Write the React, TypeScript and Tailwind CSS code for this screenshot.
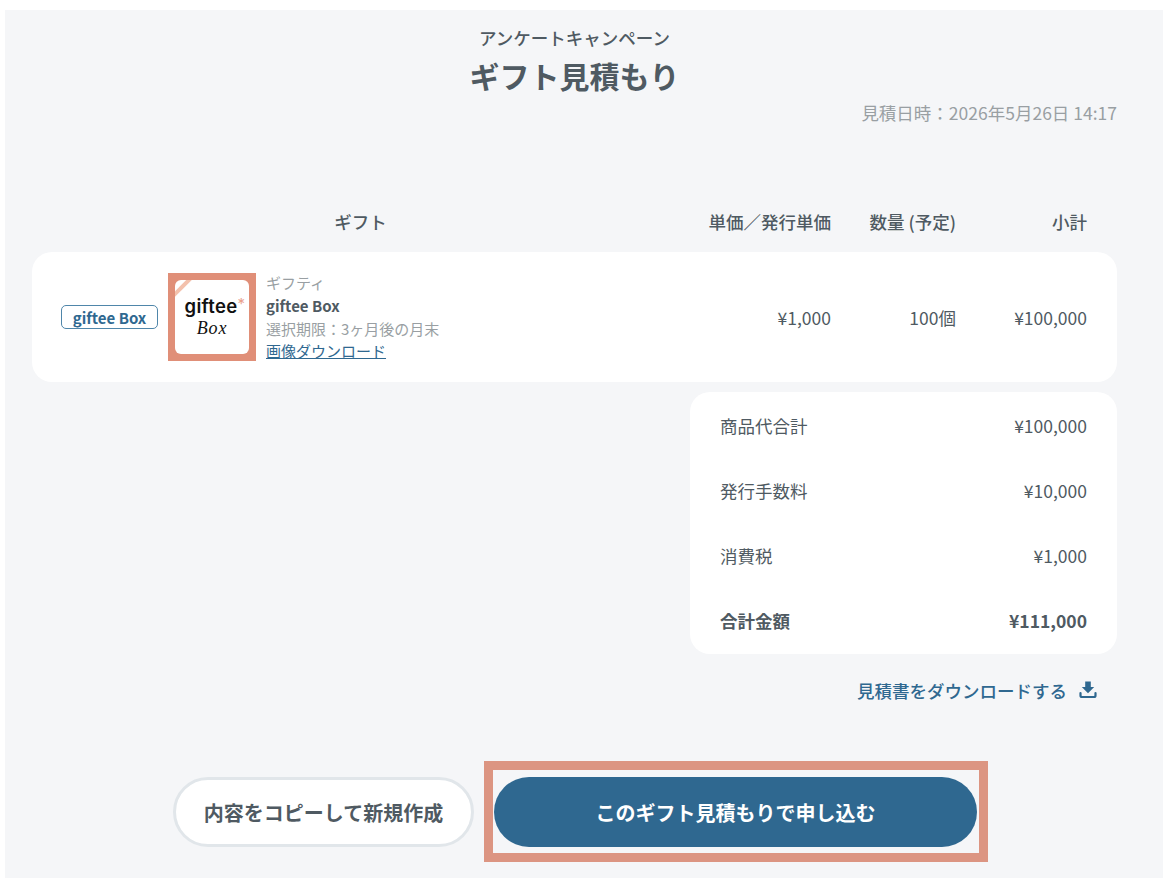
const summary = [
  { label: "商品代合計", value: "¥100,000" },
  { label: "発行手数料", value: "¥10,000" },
  { label: "消費税", value: "¥1,000" },
]

function GiftImage() {
  return (
    <div className="w-[88px] h-[88px] shrink-0 bg-[#e08f78] p-[7px]">
      <div className="relative w-[74px] h-[74px] bg-white rounded-[6px] overflow-hidden flex flex-col items-center text-[#111]">
        {/* corner ribbon */}
        <div className="absolute left-[-9px] top-[4px] w-[34px] h-[4px] bg-[#f3c1ac] -rotate-45" />
        <div className="mt-[14px] h-[24px] leading-[24px] text-[18.5px] font-semibold font-['Inter',sans-serif] tracking-[0.3px] pr-[2px]">
          giftee<span className="absolute mt-[-2px] text-[15px] font-normal text-[#e9a08c]">*</span>
        </div>
        <div className="h-[20px] leading-[20px] text-[18px] font-normal italic font-['Liberation_Serif',serif] tracking-[0.8px]">Box</div>
      </div>
    </div>
  )
}

export default function App() {
  return (
    <div className="min-h-[892px] bg-white pt-[10px] pl-[5px] pr-[13px] font-['Noto_Sans_CJK_JP',sans-serif] text-[#4f5a62]">
      <div className="h-[868px] bg-[#f5f6f8] pl-[27px] pr-[46px]">
        {/* Header */}
        <div className="pt-[16px] text-center">
          <div className="text-[17.5px] leading-[24px] font-medium">アンケートキャンペーン</div>
          <h1 className="mt-[6px] text-[30px] leading-[38px] font-bold">ギフト見積もり</h1>
        </div>
        <div className="mt-[7px] text-right text-[17.5px] leading-[24px] text-[#999fa3]">見積日時：2026年5月26日 14:17</div>

        {/* Table head */}
        <div className="mt-[85px] flex h-[24px] items-center text-[17.5px] leading-[24px] font-medium">
          <div className="w-[657px] text-center">ギフト</div>
          <div className="w-[142px] text-right whitespace-nowrap">単価／発行単価</div>
          <div className="w-[125px] text-right whitespace-nowrap">数量 (予定)</div>
          <div className="w-[131px] text-right">小計</div>
        </div>

        {/* Gift row */}
        <div className="mt-[18px] h-[130px] bg-white rounded-[20px] flex items-center pl-[29px]">
          <span className="w-[97px] h-[24px] shrink-0 rounded-[5px] border border-[#4f86aa] text-[#2f6890] text-[15px] leading-[24px] font-bold text-center">giftee Box</span>
          <div className="ml-[10px]"><GiftImage /></div>
          <div className="ml-[10px] w-[323px] text-[15px] leading-[23px] text-[#999fa3] pb-[2px]">
            <div>ギフティ</div>
            <div className="font-bold text-[#4f5a62]">giftee Box</div>
            <div>選択期限：3ヶ月後の月末</div>
            <a className="block leading-[22px] text-[#2f6890] underline">画像ダウンロード</a>
          </div>
          <div className="w-[242px] text-right text-[17.5px] pt-[2px]">¥1,000</div>
          <div className="w-[125px] text-right text-[17.5px] pt-[2px]">100個</div>
          <div className="w-[131px] text-right text-[17.5px] pt-[2px]">¥100,000</div>
        </div>

        {/* Summary */}
        <div className="mt-[10px] ml-auto w-[427px] h-[262px] bg-white rounded-[20px] px-[30px] pt-[2px] text-[17.5px]">
          {summary.map((row) => (
            <div key={row.label} className="h-[65px] flex items-center justify-between">
              <span>{row.label}</span>
              <span>{row.value}</span>
            </div>
          ))}
          <div className="h-[65px] flex items-center justify-between font-bold">
            <span>合計金額</span>
            <span>¥111,000</span>
          </div>
        </div>

        {/* Estimate download */}
        <div className="mt-[24px] h-[24px] pr-[20px] flex justify-end items-center gap-[12px] text-[#2f6890] text-[17.5px] leading-[24px] font-medium">
          <span className="translate-y-[1px]">見積書をダウンロードする</span>
          <svg width="18" height="18" viewBox="0 0 18 18" fill="none">
            <path d="M6.2 0.5h5.6v5.5h3.4L9 12.2 2.8 6h3.4z" fill="#2f6890" />
            <path d="M1.5 12v2.5A1.5 1.5 0 0 0 3 16h12a1.5 1.5 0 0 0 1.5-1.5V12" stroke="#2f6890" strokeWidth="2.2" strokeLinecap="round" />
          </svg>
        </div>

        {/* Actions */}
        <div className="mt-[59px] flex items-center pl-[141px]">
          <button className="w-[301px] h-[70px] rounded-full bg-white border-[3px] border-[#e1e6ea] pt-[2px] text-[#4f5a62] text-[20px] font-bold">内容をコピーして新規作成</button>
          <div className="ml-[10px] w-[504px] h-[101px] border-[9px] border-[#dc9582] pt-[7px] pl-[1px]">
            <button className="w-[483px] h-[70px] rounded-full bg-[#2f6890] pt-[2px] text-white text-[20px] font-bold">このギフト見積もりで申し込む</button>
          </div>
        </div>
      </div>
    </div>
  )
}
